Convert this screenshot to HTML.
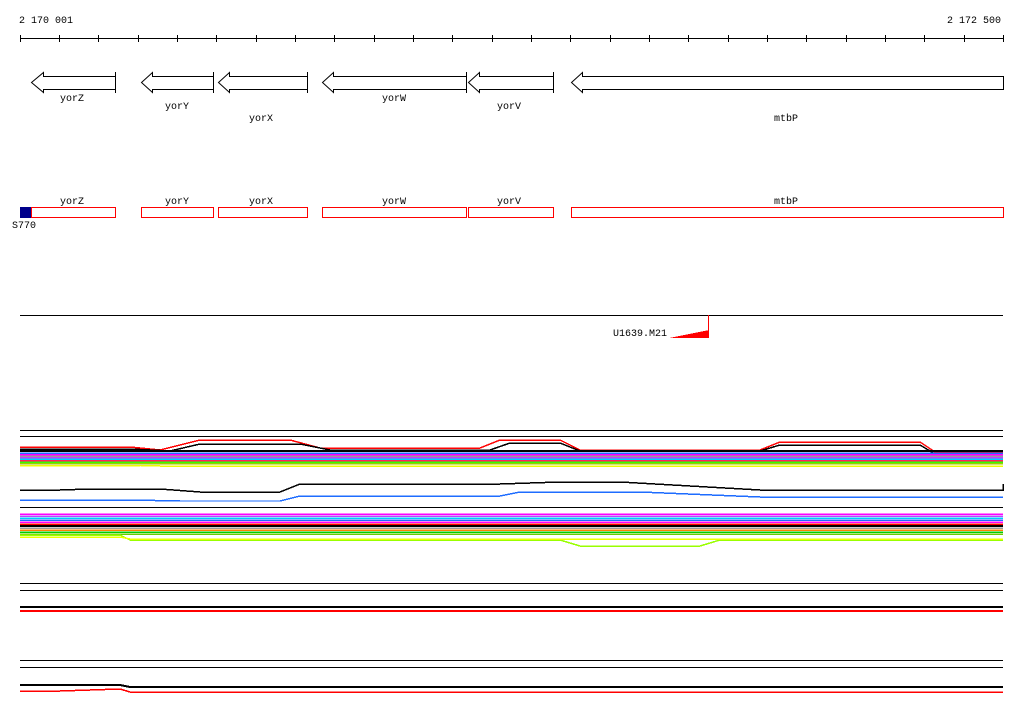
<!DOCTYPE html>
<html><head><meta charset="utf-8"><style>
html,body{margin:0;padding:0;background:#fff;width:1024px;height:714px;overflow:hidden}
svg{display:block}
text{font-family:"Liberation Mono",monospace;font-size:10px;fill:#000}
</style></head><body>
<svg width="1024" height="714" viewBox="0 0 1024 714" shape-rendering="crispEdges">
<text x="19" y="23">2 170 001</text>
<text x="947" y="23">2 172 500</text>
<line x1="20" y1="38.5" x2="1003" y2="38.5" stroke="#000"/>
<g stroke="#000">
<path d="M20.5 35v7M59.5 35v7M98.5 35v7M138.5 35v7M177.5 35v7M216.5 35v7M256.5 35v7M295.5 35v7M334.5 35v7M374.5 35v7M413.5 35v7M452.5 35v7M492.5 35v7M531.5 35v7M570.5 35v7M610.5 35v7M649.5 35v7M688.5 35v7M728.5 35v7M767.5 35v7M806.5 35v7M846.5 35v7M885.5 35v7M924.5 35v7M964.5 35v7M1003.5 35v7"/>
</g>
<g fill="#fff" stroke="#000" shape-rendering="auto">
<path d="M115.5 76.5H43.5V72.5L31.5 82.5L43.5 92.5V89.5H115.5"/>
<path d="M213.5 76.5H152.5V72.5L141.5 82.5L152.5 92.5V89.5H213.5"/>
<path d="M307.5 76.5H229.5V72.5L218.5 82.5L229.5 92.5V89.5H307.5"/>
<path d="M466.5 76.5H333.5V72.5L322.5 82.5L333.5 92.5V89.5H466.5"/>
<path d="M553.5 76.5H479.5V72.5L468.5 82.5L479.5 92.5V89.5H553.5"/>
<path d="M1003.5 76.5H582.5V72.5L571.5 82.5L582.5 92.5V89.5H1003.5Z"/>
</g>
<g stroke="#000"><path d="M115.5 72v21M213.5 72v21M307.5 72v21M466.5 72v21M553.5 72v21"/></g>
<text x="60" y="101">yorZ</text>
<text x="165" y="109">yorY</text>
<text x="249" y="121">yorX</text>
<text x="382" y="101">yorW</text>
<text x="497" y="109">yorV</text>
<text x="774" y="121">mtbP</text>
<text x="60" y="204">yorZ</text>
<text x="165" y="204">yorY</text>
<text x="249" y="204">yorX</text>
<text x="382" y="204">yorW</text>
<text x="497" y="204">yorV</text>
<text x="774" y="204">mtbP</text>
<g fill="#fff" stroke="#f00">
<rect x="31.5" y="207.5" width="84" height="10"/>
<rect x="141.5" y="207.5" width="72" height="10"/>
<rect x="218.5" y="207.5" width="89" height="10"/>
<rect x="322.5" y="207.5" width="144" height="10"/>
<rect x="468.5" y="207.5" width="85" height="10"/>
<rect x="571.5" y="207.5" width="432" height="10"/>
</g>
<rect x="20" y="207" width="11" height="11" fill="#00008b"/>
<text x="12" y="228">S770</text>
<line x1="20" y1="315.5" x2="1003" y2="315.5" stroke="#000"/>
<text x="613" y="336">U1639.M21</text>
<path d="M669 338H709V330Z" fill="#f00"/>
<line x1="708.5" y1="315" x2="708.5" y2="338" stroke="#f00"/>
<g stroke="#000"><path d="M20 430.5H1003M20 436.5H1003M20 507.5H1003M20 583.5H1003M20 590.5H1003M20 660.5H1003M20 667.5H1003"/></g>
<g fill="none" stroke-width="1.5">
<path d="M20 447H130L160 450L200 440H290L320 448H480L500 440H560L580 450H760L780 442H920L935 452H1003" stroke="#f00"/>
<path d="M20 449H130L170 451L200 444H300L330 450H490L510 443H560L580 451H760L780 445H920L935 454H1003" stroke="#000"/>
<path d="M20 451H1003" stroke="#000" stroke-width="2"/>
<path d="M20 453H1003" stroke="#1e6cff"/>
<path d="M20 454.5H1003" stroke="#f0f"/>
<path d="M20 456H1003" stroke="#999"/>
<path d="M20 457.5H1003" stroke="#c040ff"/>
<path d="M20 459H1003" stroke="#0cf"/>
<path d="M20 460.5H1003" stroke="#ff2060"/>
<path d="M20 462H1003" stroke="#3f0"/>
<path d="M20 463.5H1003" stroke="#9c0"/>
<path d="M20 465.5H140L160 466H1003" stroke="#ef0"/>
<path d="M20 490H60L90 489H160L200 492H280L300 484H500L560 482H620L760 490H1003L1003 484" stroke="#000"/>
<path d="M20 500H130L180 501H280L300 496H500L520 492H640L760 497H1003" stroke="#1e6cff"/>
<path d="M20 514H1003" stroke="#f0f"/>
<path d="M20 516H1003" stroke="#c040ff"/>
<path d="M20 518H1003" stroke="#0cf"/>
<path d="M20 520H1003" stroke="#1e6cff"/>
<path d="M20 522H1003" stroke="#f0f"/>
<path d="M20 524H1003" stroke="#f00"/>
<path d="M20 526H1003" stroke="#000" stroke-width="2"/>
<path d="M20 528H1003" stroke="#999"/>
<path d="M20 530H1003" stroke="#ff8000"/>
<path d="M20 532H1003" stroke="#0c0"/>
<path d="M20 534H1003" stroke="#6c0"/>
<path d="M20 535H120L130 540H560L580 546H700L720 540H1003" stroke="#9f0"/>
<path d="M20 537H120L130 539H1003" stroke="#ef0"/>
<path d="M20 607H1003" stroke="#000" stroke-width="2"/>
<path d="M20 611H1003" stroke="#f00" stroke-width="2"/>
<path d="M20 685H120L130 687H1003" stroke="#000" stroke-width="2"/>
<path d="M20 691H60L120 689L130 692H1003" stroke="#f00" stroke-width="1.5"/>
</g>
</svg>
</body></html>
